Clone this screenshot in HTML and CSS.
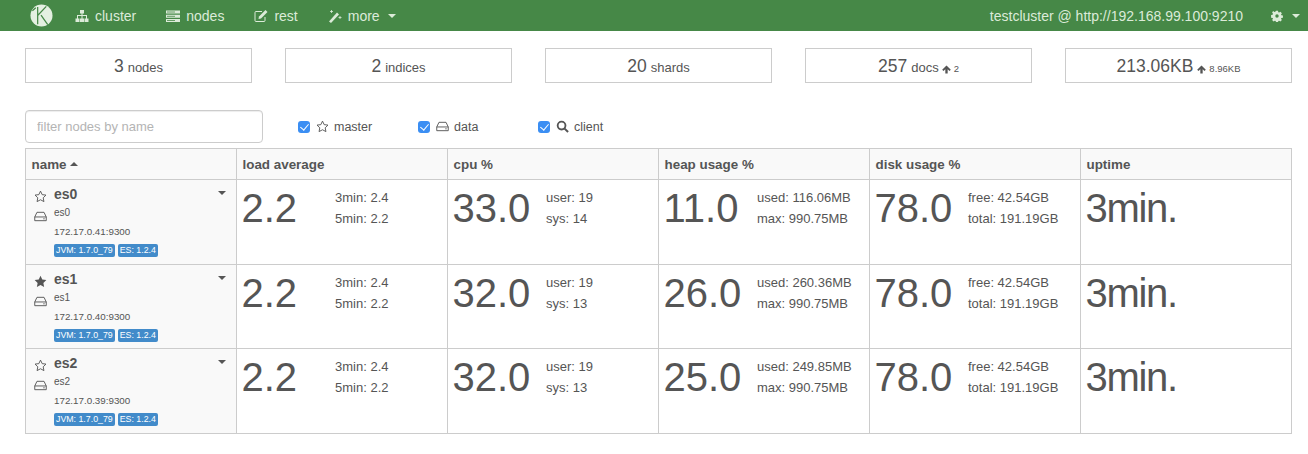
FILE: index.html
```html
<!DOCTYPE html>
<html lang="en">
<head>
    <meta charset="UTF-8">
    <title>kopf</title>
    <link rel="stylesheet" href="styles.css">
</head>
<body>
    <svg class="defs" width="0" height="0">
        <symbol id="star-o" viewBox="0 0 14 14"><path d="M7 1.200l1.800 3.800 4.100.5-3 2.900.8 4.100L7 10.500l-3.700 2 .8-4.100-3-2.900 4.100-.5z" fill="none" stroke="currentColor" stroke-width="1"/></symbol>
        <symbol id="star" viewBox="0 0 14 14"><path d="M7 .8l1.900 4 4.400.6-3.200 3.100.8 4.400L7 10.800l-3.900 2.100.8-4.400L.7 5.400l4.400-.6z" fill="currentColor"/></symbol>
        <symbol id="hdd" viewBox="0 0 14 14"><path d="M3.200 2.500h7.600l2.400 5v4H.8v-4zM.8 7.500h12.400M10 9.500h1.500" fill="none" stroke="currentColor" stroke-width="1"/></symbol>
        <symbol id="arrow-up" viewBox="0 0 10 10"><path d="M5 .5L9.800 5.300 8.300 6.700 6.300 4.700V9.500H3.700V4.700L1.700 6.700.2 5.300z" fill="currentColor"/></symbol>
    </svg>

    <header class="navbar">
        <div class="nav-left">
            <svg class="logo" viewBox="0 0 24 24"><circle cx="12" cy="12" r="11.500" fill="#e4f0e1"/><path d="M8 3V21M8 12L17 2.500M11.500 11.500L18.500 21.500M2.500 7L6 4" fill="none" stroke="#468847" stroke-width="1.300"/></svg>
            <a class="nav-item">
                <svg class="nav-icon" viewBox="0 0 14 14"><path d="M5 1h4v3.500H7.500V6H12v3.500h1.500V13h-4V9.500H11V7H7.500v2.500H9V13H5V9.500h1.500V7H3v2.500h1.500V13h-4V9.500H2V6h4.500V4.500H5z" fill="currentColor"/></svg>
                cluster
            </a>
            <a class="nav-item">
                <svg class="nav-icon" viewBox="0 0 14 14"><path d="M0 1.500h14v3H0zM0 5.800h14v3H0zM0 10h14v3H0z" fill="currentColor"/><path d="M1 3h8M1 7.300h8M1 11.500h8" stroke="#468847" stroke-width=".8"/></svg>
                nodes
            </a>
            <a class="nav-item">
                <svg class="nav-icon" viewBox="0 0 14 14"><path d="M11 8v3.500a1 1 0 0 1-1 1H2a1 1 0 0 1-1-1v-8a1 1 0 0 1 1-1h6" fill="none" stroke="currentColor"/><path d="M5 7.500L11.500 1l2 2L7 9.500l-2.500.5z" fill="currentColor"/></svg>
                rest
            </a>
            <a class="nav-item">
                <svg class="nav-icon" viewBox="0 0 14 14"><path d="M1 12.500L9 3.500l2 2L3 14z" fill="currentColor"/><path d="M3.500 1v3M2 2.500h3M12 7v3M10.500 8.500h3" stroke="currentColor" stroke-width=".8"/></svg>
                more <span class="caret caret-more"></span>
            </a>
        </div>
        <div class="nav-right">
            <span class="cluster-name">testcluster @ http://192.168.99.100:9210</span>
            <svg class="gear" viewBox="0 0 14 14"><path fill-rule="evenodd" d="M5.800.8h2.400l.3 1.800 1 .4 1.500-1 1.700 1.700-1 1.500.4 1 1.800.3v2.400l-1.800.3-.4 1 1 1.500-1.700 1.700-1.500-1-1 .4-.3 1.800H5.800l-.3-1.800-1-.4-1.500 1-1.700-1.700 1-1.500-.4-1-1.800-.3V5.800l1.800-.3.4-1-1-1.500L2.500 1.300l1.500 1 1-.4zM7 5a2 2 0 1 0 0 4 2 2 0 0 0 0-4z" fill="currentColor"/></svg>
            <span class="caret caret-gear"></span>
        </div>
    </header>

    <section class="stats">
        <div class="stat"><b>3</b> nodes</div>
        <div class="stat"><b>2</b> indices</div>
        <div class="stat"><b>20</b> shards</div>
        <div class="stat"><b>257</b> docs <svg class="up"><use href="#arrow-up"/></svg> <small>2</small></div>
        <div class="stat"><b>213.06KB</b> <svg class="up"><use href="#arrow-up"/></svg> <small>8.96KB</small></div>
    </section>

    <section class="filters">
        <input class="filter-input" type="text" placeholder="filter nodes by name">
        <label class="check check-master"><input type="checkbox" checked> <svg class="ico"><use href="#star-o"/></svg> master</label>
        <label class="check check-data"><input type="checkbox" checked> <svg class="ico"><use href="#hdd"/></svg> data</label>
        <label class="check"><input type="checkbox" checked>
            <svg class="ico" viewBox="0 0 14 14"><circle cx="6" cy="6" r="4.200" fill="none" stroke="currentColor" stroke-width="2"/><path d="M9 9l4 4" stroke="currentColor" stroke-width="2.200"/></svg>
            client</label>
    </section>

    <table class="nodes">
        <thead>
            <tr>
                <th class="col-name">name <span class="caret-up"></span></th>
                <th>load average</th>
                <th>cpu %</th>
                <th>heap usage %</th>
                <th>disk usage %</th>
                <th>uptime</th>
            </tr>
        </thead>
        <tbody>
            <tr>
                <td class="col-name">
                    <div class="node">
                        <div class="node-icons"><svg class="ico"><use href="#star-o"/></svg><svg class="ico"><use href="#hdd"/></svg></div>
                        <div class="node-info">
                            <div class="node-name">es0</div>
                            <div class="node-sub">es0</div>
                            <div class="node-addr">172.17.0.41:9300</div>
                            <div class="labels"><span class="tag">JVM: 1.7.0_79</span><span class="tag">ES: 1.2.4</span></div>
                        </div>
                        <span class="caret node-caret"></span>
                    </div>
                </td>
                <td><div class="metric"><span class="big">2.2</span><span class="detail">3min: 2.4<br>5min: 2.2</span></div></td>
                <td><div class="metric"><span class="big">33.0</span><span class="detail">user: 19<br>sys: 14</span></div></td>
                <td><div class="metric"><span class="big">11.0</span><span class="detail">used: 116.06MB<br>max: 990.75MB</span></div></td>
                <td><div class="metric"><span class="big">78.0</span><span class="detail">free: 42.54GB<br>total: 191.19GB</span></div></td>
                <td><div class="metric"><span class="big uptime">3min.</span></div></td>
            </tr>
            <tr>
                <td class="col-name">
                    <div class="node">
                        <div class="node-icons"><svg class="ico"><use href="#star"/></svg><svg class="ico"><use href="#hdd"/></svg></div>
                        <div class="node-info">
                            <div class="node-name">es1</div>
                            <div class="node-sub">es1</div>
                            <div class="node-addr">172.17.0.40:9300</div>
                            <div class="labels"><span class="tag">JVM: 1.7.0_79</span><span class="tag">ES: 1.2.4</span></div>
                        </div>
                        <span class="caret node-caret"></span>
                    </div>
                </td>
                <td><div class="metric"><span class="big">2.2</span><span class="detail">3min: 2.4<br>5min: 2.2</span></div></td>
                <td><div class="metric"><span class="big">32.0</span><span class="detail">user: 19<br>sys: 13</span></div></td>
                <td><div class="metric"><span class="big">26.0</span><span class="detail">used: 260.36MB<br>max: 990.75MB</span></div></td>
                <td><div class="metric"><span class="big">78.0</span><span class="detail">free: 42.54GB<br>total: 191.19GB</span></div></td>
                <td><div class="metric"><span class="big uptime">3min.</span></div></td>
            </tr>
            <tr>
                <td class="col-name">
                    <div class="node">
                        <div class="node-icons"><svg class="ico"><use href="#star-o"/></svg><svg class="ico"><use href="#hdd"/></svg></div>
                        <div class="node-info">
                            <div class="node-name">es2</div>
                            <div class="node-sub">es2</div>
                            <div class="node-addr">172.17.0.39:9300</div>
                            <div class="labels"><span class="tag">JVM: 1.7.0_79</span><span class="tag">ES: 1.2.4</span></div>
                        </div>
                        <span class="caret node-caret"></span>
                    </div>
                </td>
                <td><div class="metric"><span class="big">2.2</span><span class="detail">3min: 2.4<br>5min: 2.2</span></div></td>
                <td><div class="metric"><span class="big">32.0</span><span class="detail">user: 19<br>sys: 13</span></div></td>
                <td><div class="metric"><span class="big">25.0</span><span class="detail">used: 249.85MB<br>max: 990.75MB</span></div></td>
                <td><div class="metric"><span class="big">78.0</span><span class="detail">free: 42.54GB<br>total: 191.19GB</span></div></td>
                <td><div class="metric"><span class="big uptime">3min.</span></div></td>
            </tr>
        </tbody>
    </table>
</body>
</html>
```

FILE: styles.css
```css
*
{
    box-sizing: border-box;
}

body
{
    margin: 0;
    padding-bottom: 20px;
    font-family: "Liberation Sans", Arial, sans-serif;
    font-size: 12px;
    color: #555;
    background-color: #fff;
}

.defs
{
    position: absolute;
}

.navbar
{
    display: flex;
    justify-content: space-between;
    align-items: center;
    height: 31px;
    padding: 0 8px 0 30px;
    background-color: #468847;
    color: #dcebd9;
    font-size: 14px;
}

.nav-left, .nav-right
{
    display: flex;
    align-items: center;
}

.logo
{
    width: 23px;
    height: 23px;
    margin-right: 22px;
}

.nav-item
{
    display: flex;
    align-items: center;
    gap: 6px;
    margin-right: 30px;
}

.nav-icon
{
    width: 14px;
    height: 14px;
}

.caret
{
    display: inline-block;
    width: 0;
    height: 0;
    margin-left: 4px;
    border-top: 4px solid currentColor;
    border-left: 4px solid transparent;
    border-right: 4px solid transparent;
}

.caret-more
{
    margin-left: 2px;
}

.caret-gear
{
    margin-left: 9px;
}

.cluster-name
{
    margin-right: 28px;
}

.gear
{
    width: 12px;
    height: 12px;
}

.stats
{
    display: grid;
    grid-template-columns: repeat(5, 227px);
    gap: 33px;
    margin: 17px 0 0 25px;
}

.stat
{
    display: flex;
    justify-content: center;
    align-items: baseline;
    gap: 3px;
    height: 35px;
    padding-top: 7px;
    border: 1px solid #ccc;
    font-size: 13px;
}

.stat b
{
    font-weight: normal;
    font-size: 17.500px;
    margin-right: 1px;
}

.stat small
{
    font-size: 9.500px;
}

.up
{
    width: 9px;
    height: 9px;
    align-self: center;
    margin-top: 1px;
}

.filters
{
    display: flex;
    align-items: center;
    margin: 27px 0 5px 25px;
}

.filter-input
{
    width: 238px;
    height: 33px;
    padding: 0 11px;
    border: 1px solid #ccc;
    border-radius: 4px;
    font-family: inherit;
    font-size: 13px;
    box-shadow: inset 0 1px 1px rgba(0, 0, 0, 0.075);
}

.filter-input::placeholder
{
    color: #b4b4b4;
}

.check
{
    display: flex;
    align-items: center;
    gap: 5px;
    width: 120px;
    font-size: 12.500px;
}

.check input
{
    position: relative;
    appearance: none;
    width: 12px;
    height: 12px;
    margin: 0 1px 0 0;
    border-radius: 3px;
    background-color: #3b8ef3;
}

.check input::after
{
    content: "";
    position: absolute;
    left: 4px;
    top: 1.500px;
    width: 4px;
    height: 7px;
    border: solid #fff;
    border-width: 0 1.500px 1.500px 0;
    transform: rotate(40deg);
}

.check-master
{
    margin-left: 35px;
}

.ico
{
    width: 13px;
    height: 13px;
    flex: none;
}

.nodes
{
    width: 1267px;
    margin-left: 25px;
    border-collapse: collapse;
    table-layout: fixed;
}

.nodes th, .nodes td
{
    padding: 0;
    border: 1px solid #ccc;
    vertical-align: top;
}

.nodes th
{
    height: 31px;
    padding: 0 5.500px;
    text-align: left;
    vertical-align: middle;
    font-size: 13.400px;
    background-color: #f9f9f9;
}

.nodes td
{
    height: 84.500px;
}

.col-name
{
    width: 211px;
}

.nodes td.col-name
{
    background-color: #f9f9f9;
}

.caret-up
{
    display: inline-block;
    vertical-align: 3px;
    border-bottom: 4px solid currentColor;
    border-left: 4px solid transparent;
    border-right: 4px solid transparent;
}

.node
{
    display: flex;
    padding: 5px 10px 0 8px;
}

.node-icons
{
    display: flex;
    flex-direction: column;
    gap: 7px;
    padding-top: 5px;
    margin-right: 7px;
}

.node-info
{
    flex: 1;
}

.node-name
{
    font-size: 14px;
    font-weight: bold;
    line-height: 18px;
}

.node-sub
{
    margin-top: 1px;
    font-size: 10px;
    line-height: 18px;
}

.node-addr
{
    margin-top: 1px;
    font-size: 9.800px;
    line-height: 18px;
}

.labels
{
    display: flex;
    gap: 3px;
    margin-top: 3px;
}

.tag
{
    padding: 0 2px;
    height: 13px;
    line-height: 13px;
    border-radius: 2px;
    background-color: #428bca;
    color: #fff;
    font-size: 8.800px;
}

.node-caret
{
    margin-top: 6px;
}

.metric
{
    display: flex;
    padding: 5px 0 0 4.500px;
}

.big
{
    width: 93.500px;
    font-size: 40px;
    line-height: 46px;
}

.uptime
{
    letter-spacing: -1.300px;
}

.detail
{
    font-size: 13px;
    line-height: 21px;
    padding-top: 2px;
}
```
